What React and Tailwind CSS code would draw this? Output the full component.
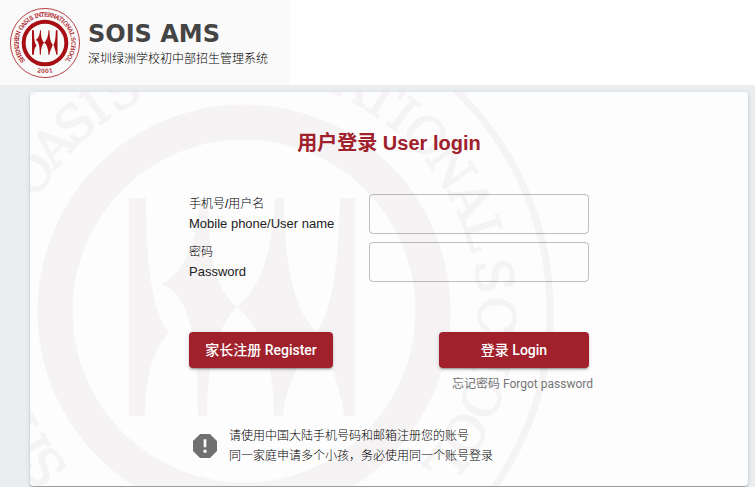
import { useState } from 'react'
import { MdReport } from 'react-icons/md'

// [letter, angle in degrees clockwise from the top]
const SEAL_LETTERS = [
  ['S', -128], ['H', -120], ['E', -111], ['N', -103], ['Z', -95], ['H', -87], ['E', -79], ['N', -70],
  ['O', -57], ['A', -49], ['S', -42], ['I', -36], ['S', -29],
  ['I', -19], ['N', -13], ['T', -5], ['E', 2], ['R', 10], ['N', 18], ['A', 26], ['T', 33], ['I', 39], ['O', 46], ['N', 55], ['A', 64], ['L', 72],
  ['S', 82], ['C', 91], ['H', 100], ['O', 110], ['O', 119], ['L', 127],
]

const SEAL_YEAR = [['2', 12], ['0', 4], ['0', -4], ['1', -12]]

function Seal({ className, label }) {
  return (
    <svg
      viewBox="-310 -310 620 620"
      className={className}
      fill="currentColor"
      role={label ? 'img' : undefined}
      aria-label={label}
      aria-hidden={label ? undefined : true}
    >
      <circle r="306" fill="none" stroke="currentColor" strokeWidth="7" />
      <circle r="189" fill="none" stroke="currentColor" strokeWidth="35" />
      {/* four pillars */}
      <path d="M-115 -113H-98C-98 -60 -95 -5 -75 22C-92 38 -99 70 -99 105H-115Z" />
      <path d="M-44 -113H-36C-36 -60 -30 -22 -7 -4C16 -22 29 -60 31 -113H40C40 -60 46 -6 72 21C90 0 95 -60 96 -113H111V105H100C98 80 84 50 78 21H66C62 45 42 70 39 105H30C30 55 18 16 -7 -4C-26 14 -37 50 -37 105H-46C-46 30 -54 -18 -83 -27C-58 -38 -46 -75 -44 -113Z" />
      <g
        fontFamily="'DejaVu Serif', serif"
        fontSize="50"
        textAnchor="middle"
        stroke="currentColor"
        strokeWidth="1.5"
      >
        {SEAL_LETTERS.map(([letter, angle]) => (
          <text key={angle} y="-235" transform={`rotate(${angle})`}>{letter}</text>
        ))}
        {SEAL_YEAR.map(([digit, angle]) => (
          <text key={angle} y="266" transform={`rotate(${angle})`}>{digit}</text>
        ))}
      </g>
    </svg>
  )
}

function Field({ id, label, sublabel, type, value, onChange }) {
  return (
    <div className="flex items-center">
      <label htmlFor={id} className="w-[180px] shrink-0 text-xs leading-5">
        <span className="block font-light text-black">{label}</span>
        <span className="block text-[13px] leading-5">{sublabel}</span>
      </label>
      <input
        id={id}
        type={type}
        value={value}
        onChange={e => onChange(e.target.value)}
        className="h-10 min-w-0 flex-1 rounded border border-black/25 bg-transparent px-3 text-sm outline-none focus:border-[#a0212b]"
      />
    </div>
  )
}

const BUTTON = 'h-9 rounded bg-[#a0212b] px-4 text-sm font-medium text-white shadow-[0_3px_1px_-2px_rgba(0,0,0,0.2),0_2px_2px_0_rgba(0,0,0,0.14),0_1px_5px_0_rgba(0,0,0,0.12)]'

export default function App() {
  const [username, setUsername] = useState('')
  const [password, setPassword] = useState('')

  return (
    <div className="min-h-screen bg-[#eaeef1] font-['Liberation_Sans','Noto_Sans_CJK_SC',sans-serif] text-[#222]">
      <header className="bg-white">
        <div className="flex h-[85px] w-[290px] items-center gap-2 bg-[#fafafa] pl-[10px]">
          <Seal className="size-[70px] shrink-0 text-[#a80f14]" label="Shenzhen Oasis International School" />
          <div className="pt-0.5">
            <h1 className="font-['DejaVu_Sans',sans-serif] text-2xl leading-[30px] font-bold text-[#444]">SOIS AMS</h1>
            <p className="text-xs leading-5 font-light whitespace-nowrap text-black">深圳绿洲学校初中部招生管理系统</p>
          </div>
        </div>
      </header>

      <main className="pt-[7px] pr-[7px] pl-[30px]">
        <section className="relative overflow-hidden rounded bg-[#fdfdfd] px-4 pt-[35px] pb-5 shadow-[0_3px_1px_-2px_rgba(0,0,0,0.2),0_2px_2px_0_rgba(0,0,0,0.14),0_1px_5px_0_rgba(0,0,0,0.12)]">
          <Seal className="pointer-events-none absolute -top-[91px] -left-24 size-[620px] max-w-none text-[#f5f3f4]" />

          <form className="relative mx-auto max-w-[400px]" onSubmit={e => e.preventDefault()}>
            <h2 className="text-center text-xl leading-8 font-bold text-[#a0212b]">用户登录 User login</h2>

            <div className="mt-[35px] flex flex-col gap-2">
              <Field id="username" label="手机号/用户名" sublabel="Mobile phone/User name" type="text" value={username} onChange={setUsername} />
              <Field id="password" label="密码" sublabel="Password" type="password" value={password} onChange={setPassword} />
            </div>

            <div className="mt-[50px] flex items-start justify-between font-['Roboto','Noto_Sans_CJK_SC',sans-serif]">
              <button type="button" className={`${BUTTON} w-36`}>家长注册 Register</button>
              <div className="flex w-[150px] flex-col">
                <button type="submit" className={BUTTON}>登录 Login</button>
                <a href="#forgot" className="-mr-1 mt-[6px] text-right text-xs leading-5 text-[#757575]">忘记密码 Forgot password</a>
              </div>
            </div>

            <div className="mt-8 flex items-center gap-2">
              <MdReport className="size-8 shrink-0 text-[#707070]" />
              <p className="text-xs leading-5 font-light text-black">
                请使用中国大陆手机号码和邮箱注册您的账号
                <br />
                同一家庭申请多个小孩，务必使用同一个账号登录
              </p>
            </div>
          </form>
        </section>
      </main>
    </div>
  )
}
